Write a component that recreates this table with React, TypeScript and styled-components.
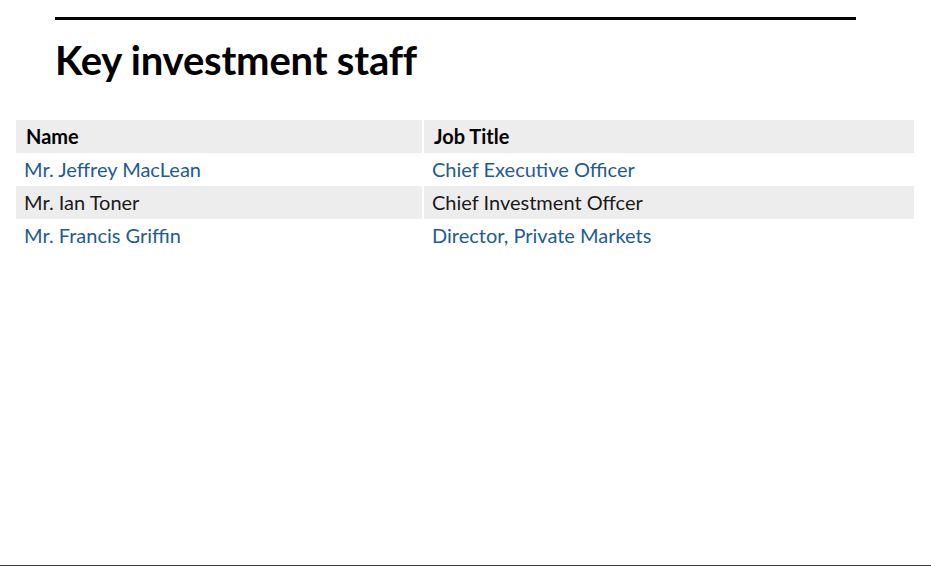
import React from 'react';
import styled, { createGlobalStyle } from 'styled-components';

const GlobalStyle = createGlobalStyle`
  html, body {
    margin: 0;
    padding: 0;
    background: #ffffff;
  }
  body {
    font-family: Lato, "Open Sans", sans-serif;
    color: #1a1a1a;
  }
`;

const Page = styled.main`
  box-sizing: border-box;
  min-height: 566px;
  padding-top: 17px;
  border-bottom: 1px solid #3a3a3a;
`;

const Section = styled.header`
  margin-left: 55px;
  width: 801px;
  border-top: 3px solid #000000;
`;

const Heading = styled.h1`
  margin: 0;
  padding: 16px 0 36px;
  font-size: 40px;
  line-height: 48px;
  font-weight: 700;
  color: #000000;
  letter-spacing: -0.2px;
`;

const StaffTable = styled.table`
  margin-left: 14px;
  width: 902px;
  table-layout: fixed;
  border-collapse: separate;
  border-spacing: 2px 0;
  font-size: 20px;
`;

const HeadCell = styled.th`
  background: #ededed;
  text-align: left;
  font-weight: 700;
  color: #000000;
  height: 33px;
  padding: 0 10px 2px;
  box-sizing: border-box;
`;

const Row = styled.tr<{ $shaded: boolean }>`
  background: ${(p) => (p.$shaded ? '#ededed' : '#ffffff')};
`;

const Cell = styled.td<{ $link: boolean }>`
  height: 33px;
  padding: 0 8px 2px;
  box-sizing: border-box;
  color: ${(p) => (p.$link ? '#1d5b94' : '#1a1a1a')};
  background: inherit;
`;

const staff = [
  { name: 'Mr. Jeffrey MacLean', title: 'Chief Executive Officer', link: true },
  { name: 'Mr. Ian Toner', title: 'Chief Investment Offcer', link: false },
  { name: 'Mr. Francis Griffin', title: 'Director, Private Markets', link: true },
];

export default function App() {
  return (
    <>
      <GlobalStyle />
      <Page>
        <Section>
          <Heading>Key investment staff</Heading>
        </Section>
        <StaffTable>
          <colgroup>
            <col style={{ width: 406 }} />
            <col />
          </colgroup>
          <thead>
            <tr>
              <HeadCell>Name</HeadCell>
              <HeadCell>Job Title</HeadCell>
            </tr>
          </thead>
          <tbody>
            {staff.map((s, i) => (
              <Row key={s.name} $shaded={i % 2 === 1}>
                <Cell $link={s.link}>{s.name}</Cell>
                <Cell $link={s.link}>{s.title}</Cell>
              </Row>
            ))}
          </tbody>
        </StaffTable>
      </Page>
    </>
  );
}
